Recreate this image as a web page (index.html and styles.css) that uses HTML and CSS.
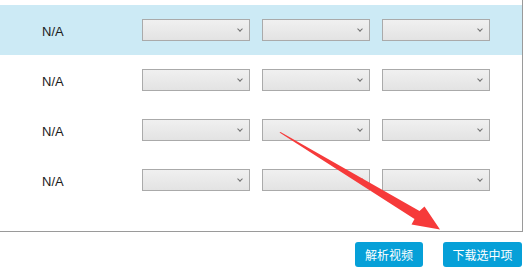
FILE: index.html
```html
<!DOCTYPE html>
<html>
<head>
<meta charset="utf-8">
<link rel="stylesheet" href="styles.css">
</head>
<body>
<div class="page">
  <div class="panel">
    <div class="row active">
      <div class="label">N/A</div>
      <div class="select"><span class="chev"></span></div>
      <div class="select"><span class="chev"></span></div>
      <div class="select"><span class="chev"></span></div>
    </div>
    <div class="row">
      <div class="label">N/A</div>
      <div class="select"><span class="chev"></span></div>
      <div class="select"><span class="chev"></span></div>
      <div class="select"><span class="chev"></span></div>
    </div>
    <div class="row">
      <div class="label">N/A</div>
      <div class="select"><span class="chev"></span></div>
      <div class="select"><span class="chev"></span></div>
      <div class="select"><span class="chev"></span></div>
    </div>
    <div class="row">
      <div class="label">N/A</div>
      <div class="select"><span class="chev"></span></div>
      <div class="select"><span class="chev"></span></div>
      <div class="select"><span class="chev"></span></div>
    </div>
  </div>
  <div class="actions">
    <button class="btn btn-parse">解析视频</button>
    <button class="btn btn-download">下载选中项</button>
  </div>
  <svg class="arrow" width="526" height="276" viewBox="0 0 526 276">
    <polygon points="279.5,132.5 414.5,219 411.5,224.5 440,229.5 424.5,206.5 419.5,211 280.5,132" fill="#f63a3a"/>
  </svg>
</div>
</body>
</html>
```
FILE: styles.css
```css
html, body {
  margin: 0;
  padding: 0;
  background: #ffffff;
}
.page {
  position: relative;
  width: 526px;
  height: 276px;
  font-family: "Liberation Sans", Arial, sans-serif;
}
.panel {
  box-sizing: border-box;
  width: 523px;
  height: 232px;
  padding-top: 5px;
  border-right: 1px solid #9a9a9a;
  border-bottom: 1px solid #9a9a9a;
}
.row {
  display: flex;
  align-items: center;
  gap: 12px;
  height: 50px;
}
.row.active {
  background: #cceaf5;
}
.label {
  width: 130px;
  box-sizing: border-box;
  padding-left: 42px;
  font-size: 13px;
  color: #1a1a1a;
  padding-top: 2px;
}
.select {
  position: relative;
  box-sizing: border-box;
  width: 108px;
  height: 22px;
  border: 1px solid #aaaaaa;
  background: linear-gradient(#f0f0f0, #e3e3e3);
}
.chev {
  position: absolute;
  right: 7px;
  top: 7px;
  width: 3px;
  height: 3px;
  border-right: 1px solid #707070;
  border-bottom: 1px solid #707070;
  transform: rotate(45deg);
}
.actions {
  display: flex;
  justify-content: flex-end;
  gap: 20px;
  padding-top: 10px;
  padding-right: 4px;
}
.btn {
  box-sizing: border-box;
  height: 25px;
  padding: 0;
  border: none;
  border-radius: 3px;
  background: #06a0d8;
  color: #ffffff;
  font-family: "Noto Sans CJK SC", "Liberation Sans", sans-serif;
  font-size: 12px;
  line-height: 25px;
  text-align: center;
}
.btn-parse {
  width: 68px;
}
.btn-download {
  width: 79px;
}
.arrow {
  position: absolute;
  left: 0;
  top: 0;
  pointer-events: none;
}
```
